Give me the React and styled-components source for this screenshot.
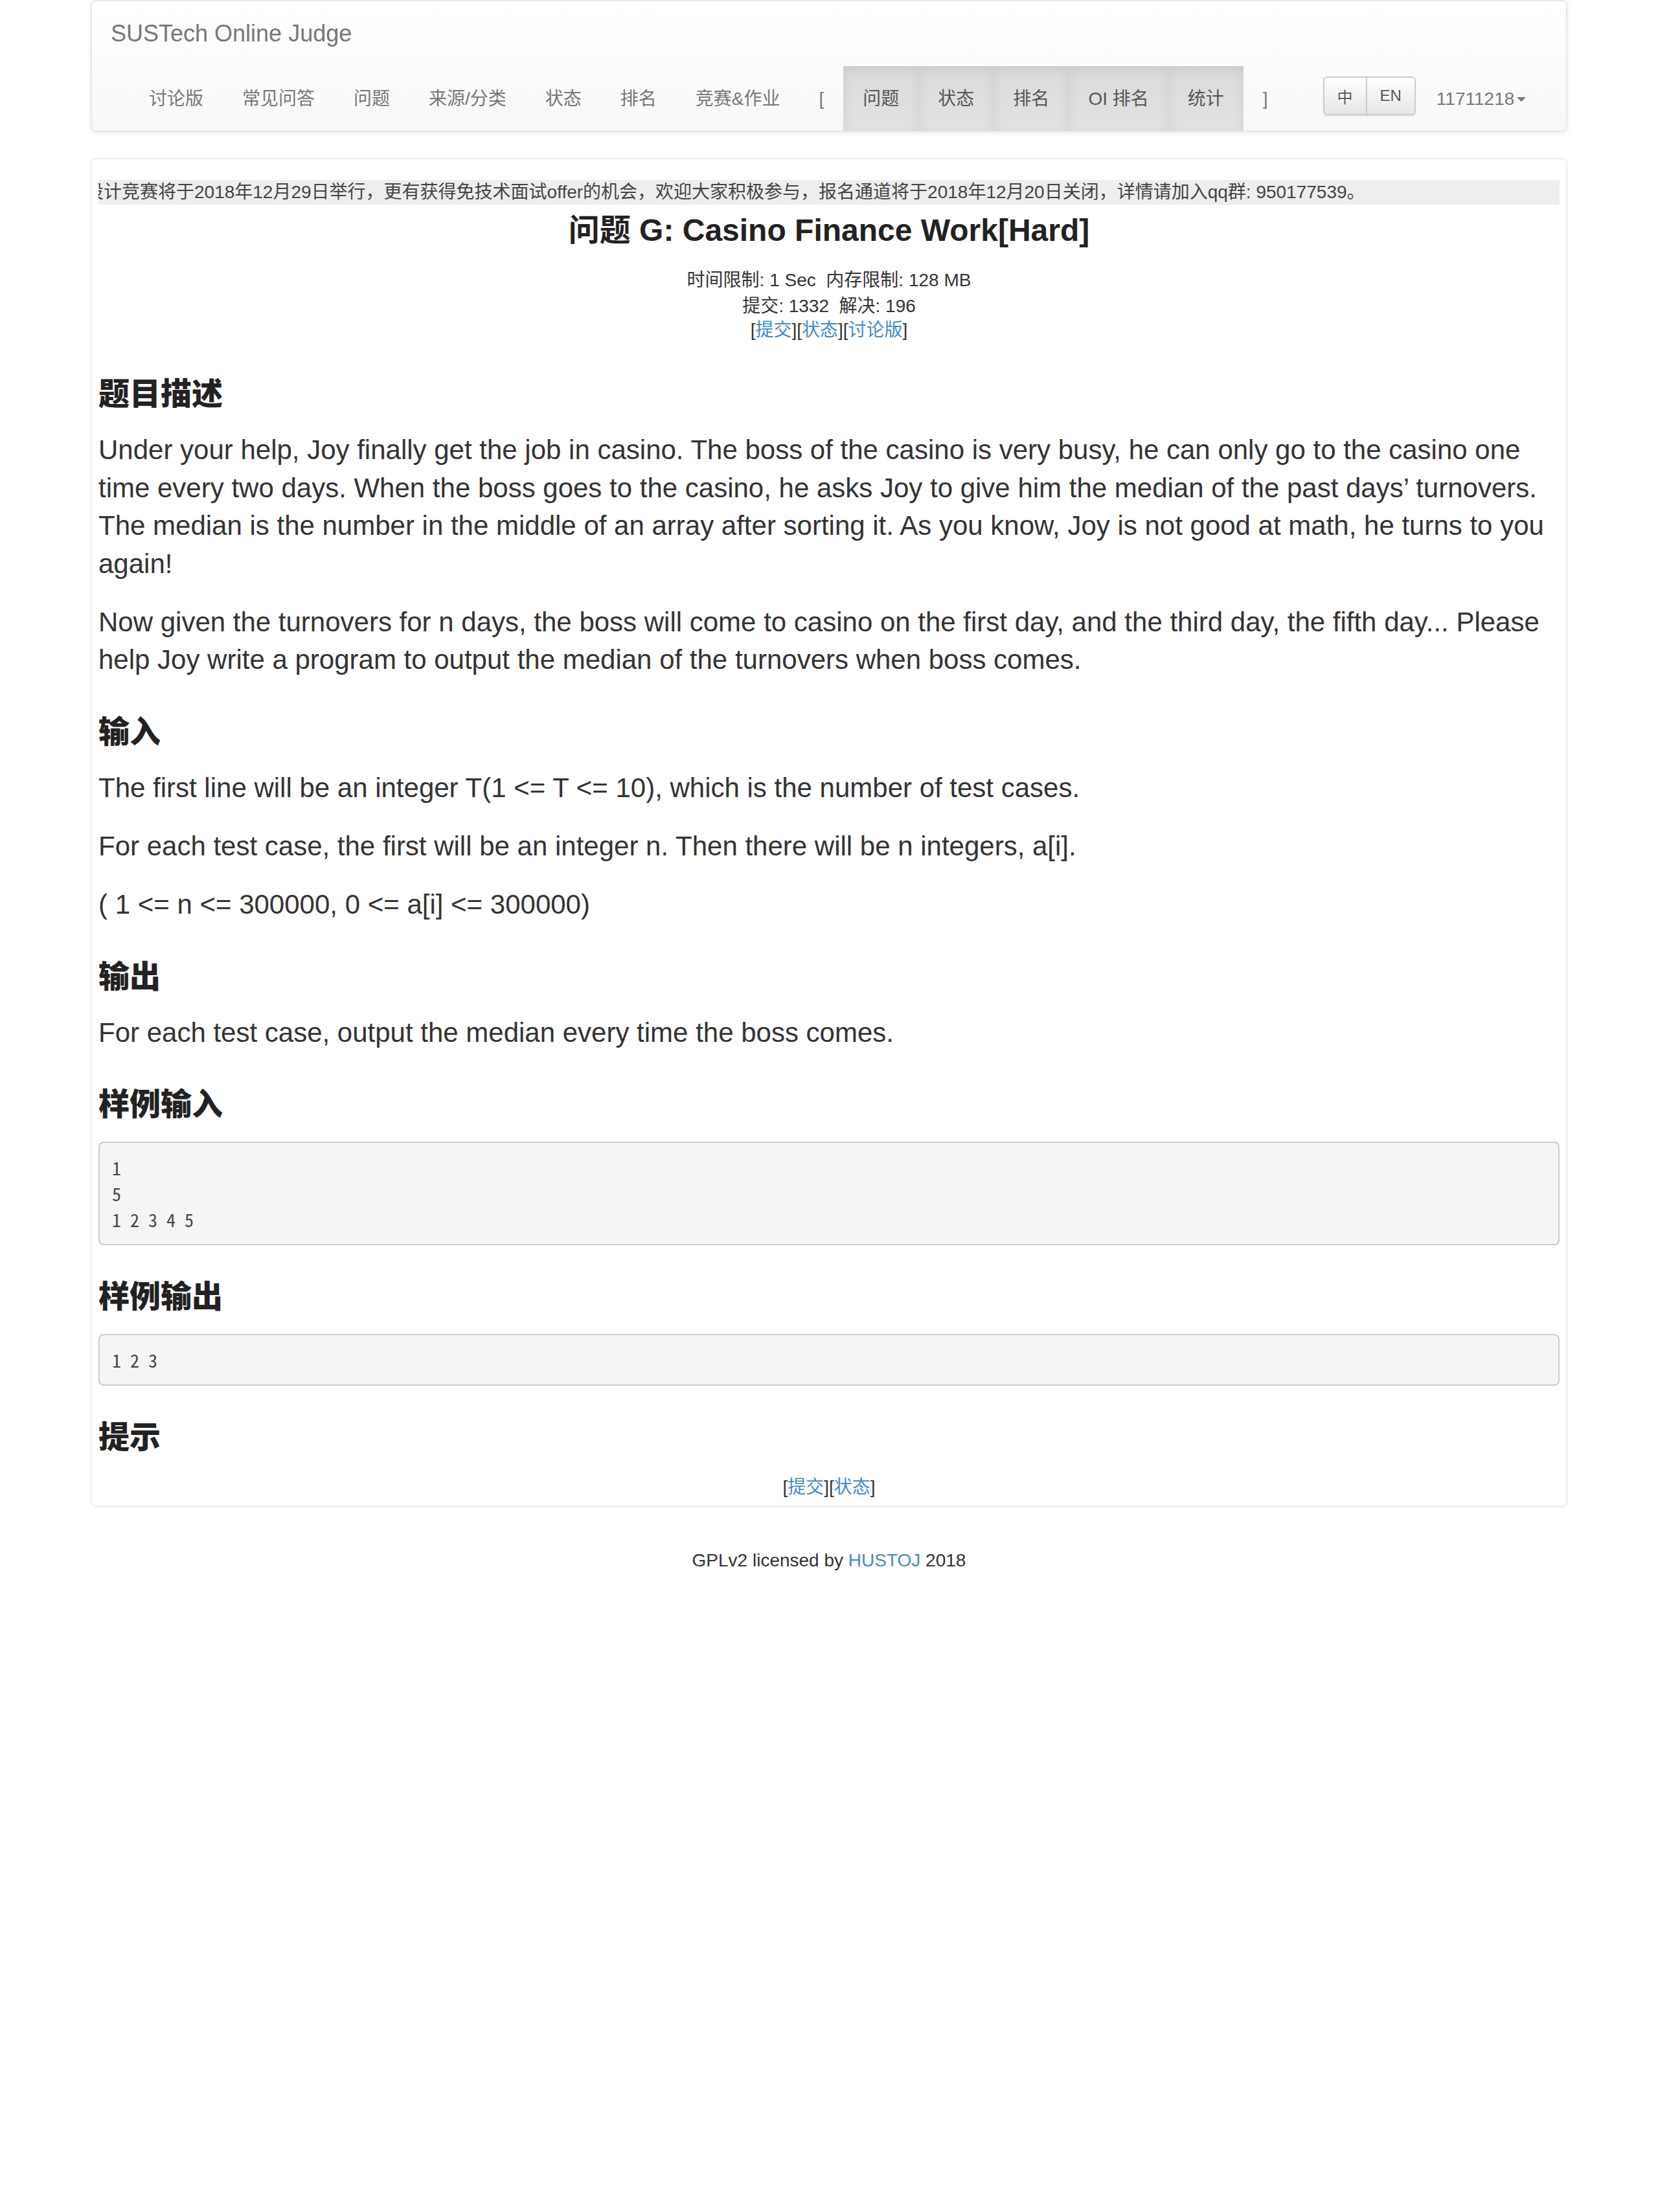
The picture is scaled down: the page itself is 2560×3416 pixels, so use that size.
import React from 'react';
import styled, { createGlobalStyle } from 'styled-components';

const mainLinks = ['讨论版', '常见问答', '问题', '来源/分类', '状态', '排名', '竞赛&作业'];
const contestLinks = ['问题', '状态', '排名', 'OI 排名', '统计'];

export default function App() {
  return (
    <>
      <GlobalStyle />
      <Page>
        <Navbar>
          <BrandRow>
            <Brand>SUSTech Online Judge</Brand>
          </BrandRow>
          <NavRow>
            {mainLinks.map((name) => (
              <NavItem key={name}>{name}</NavItem>
            ))}
            <NavItem>[</NavItem>
            {contestLinks.map((name) => (
              <NavItem key={name} $active>
                {name}
              </NavItem>
            ))}
            <NavItem>]</NavItem>
            <LangGroup>
              <LangButton>中</LangButton>
              <LangButton>EN</LangButton>
            </LangGroup>
            <UserMenu>
              11711218
              <Caret />
            </UserMenu>
          </NavRow>
        </Navbar>

        <Panel>
          <Notice>
            <NoticeText>
              设计竞赛将于2018年12月29日举行，更有获得免技术面试offer的机会，欢迎大家积极参与，报名通道将于2018年12月20日关闭，详情请加入qq群: 950177539。
            </NoticeText>
          </Notice>
          <Title>问题 G: Casino Finance Work[Hard]</Title>
          <Meta>
            <MetaLine>时间限制: 1 Sec&nbsp;&nbsp;内存限制: 128 MB</MetaLine>
            <MetaLine>提交: 1332&nbsp;&nbsp;解决: 196</MetaLine>
            <MetaLine $tight>
              [<Link>提交</Link>][<Link>状态</Link>][<Link>讨论版</Link>]
            </MetaLine>
          </Meta>

          <Section>
            <SectionTitle>题目描述</SectionTitle>
            <Para>
              Under your help, Joy finally get the job in casino. The boss of the casino is very busy, he can only go to the casino one
              time every two days. When the boss goes to the casino, he asks Joy to give him the median of the past days’ turnovers.
              The median is the number in the middle of an array after sorting it. As you know, Joy is not good at math, he turns to you
              again!
            </Para>
            <Para>
              Now given the turnovers for n days, the boss will come to casino on the first day, and the third day, the fifth day... Please
              help Joy write a program to output the median of the turnovers when boss comes.
            </Para>
          </Section>

          <Section>
            <SectionTitle>输入</SectionTitle>
            <Para>The first line will be an integer T(1 &lt;= T &lt;= 10), which is the number of test cases.</Para>
            <Para>For each test case, the first will be an integer n. Then there will be n integers, a[i].</Para>
            <Para>( 1 &lt;= n &lt;= 300000, 0 &lt;= a[i] &lt;= 300000)</Para>
          </Section>

          <Section>
            <SectionTitle>输出</SectionTitle>
            <Para>For each test case, output the median every time the boss comes.</Para>
          </Section>

          <Section>
            <SectionTitle>样例输入</SectionTitle>
            <Sample>{'1\n5\n1 2 3 4 5'}</Sample>
          </Section>

          <Section>
            <SectionTitle>样例输出</SectionTitle>
            <Sample>{'1 2 3'}</Sample>
          </Section>

          <Section>
            <SectionTitle>提示</SectionTitle>
            <MetaLine>
              [<Link>提交</Link>][<Link>状态</Link>]
            </MetaLine>
          </Section>
        </Panel>

        <Footer>
          GPLv2 licensed by <Link>HUSTOJ</Link> 2018
        </Footer>
      </Page>
    </>
  );
}

const GlobalStyle = createGlobalStyle`
  body {
    margin: 0;
    background: #fff;
    color: #333;
    font-family: "Liberation Sans", Arial, "Noto Sans CJK SC", sans-serif;
    font-size: 28px;
    line-height: 40px;
  }
`;

const Page = styled.div`
  width: 2280px;
  margin: 0 auto;
`;

const Navbar = styled.nav`
  margin-bottom: 40px;
  border: 2px solid #e7e7e7;
  border-radius: 8px;
  background: linear-gradient(to bottom, #fff 0, #f8f8f8 100%);
  box-shadow: inset 0 2px 0 rgba(255, 255, 255, 0.15), 0 2px 10px rgba(0, 0, 0, 0.075);
`;

const BrandRow = styled.div`
  height: 100px;
  display: flex;
  align-items: center;
  padding-left: 29px;
`;

const Brand = styled.a`
  font-size: 36px;
  line-height: 40px;
  color: #777;
  cursor: pointer;
`;

const NavRow = styled.div`
  height: 100px;
  display: flex;
  align-items: stretch;
  padding-left: 58px;
`;

const NavItem = styled.a`
  display: flex;
  align-items: center;
  padding: 2px 30px 0;
  color: ${(p) => (p.$active ? '#555' : '#777')};
  background: ${(p) => (p.$active ? 'linear-gradient(to bottom, #dbdbdb 0, #e2e2e2 100%)' : 'none')};
  box-shadow: ${(p) => (p.$active ? 'inset 0 6px 18px rgba(0, 0, 0, 0.075)' : 'none')};
  white-space: nowrap;
  cursor: pointer;
`;

const LangGroup = styled.div`
  display: flex;
  align-self: flex-start;
  margin: 16px 0 0 55px;
`;

const LangButton = styled.button`
  height: 60px;
  padding: 0 20px;
  font-family: inherit;
  font-size: 24px;
  color: #555;
  text-shadow: 0 2px 0 #fff;
  background: linear-gradient(to bottom, #fff 0, #e6e6e6 100%);
  border: 2px solid #ccc;
  box-shadow: inset 0 2px 0 rgba(255, 255, 255, 0.15), 0 2px 2px rgba(0, 0, 0, 0.075);
  cursor: pointer;

  &:first-child {
    border-radius: 6px 0 0 6px;
  }
  & + & {
    margin-left: -2px;
    border-radius: 0 6px 6px 0;
  }
`;

const UserMenu = styled.a`
  display: flex;
  align-items: center;
  padding: 2px 30px 0 32px;
  color: #777;
  cursor: pointer;
`;

const Caret = styled.span`
  width: 0;
  height: 0;
  margin-left: 4px;
  border-top: 7px solid #777;
  border-left: 7px solid transparent;
  border-right: 7px solid transparent;
`;

const Panel = styled.main`
  border: 2px solid #eee;
  border-radius: 8px;
  padding: 32px 10px 8px;
  box-shadow: 0 2px 4px rgba(0, 0, 0, 0.04);
`;

const Notice = styled.div`
  height: 38px;
  line-height: 38px;
  background: #eee;
  color: #444;
  overflow: hidden;
  white-space: nowrap;
`;

const NoticeText = styled.div`
  margin-left: -20px;
`;

const Title = styled.h2`
  margin: 13px 0 0;
  font-size: 48px;
  line-height: 53px;
  font-weight: bold;
  text-align: center;
  color: #222;
`;

const Meta = styled.div`
  margin-top: 31px;
`;

const MetaLine = styled.div`
  text-align: center;
  line-height: ${(p) => (p.$tight ? '34px' : '40px')};
`;

const Link = styled.a`
  color: #428bca;
  text-decoration: none;
  cursor: pointer;
`;

const Section = styled.section`
  margin-top: 56px;
`;

const SectionTitle = styled.h2`
  margin: 0 0 31px;
  font-size: 48px;
  line-height: 52px;
  font-weight: 900;
  color: #222;
`;

const Para = styled.p`
  margin: 0;
  font-size: 42px;
  line-height: 58.6px;

  & + & {
    margin-top: 31.4px;
  }
`;

const Sample = styled.pre`
  margin: 2px 0 -2px;
  padding: 18px 19px;
  font-family: "Noto Sans Mono CJK SC", "Liberation Mono", monospace;
  font-size: 28px;
  line-height: 40px;
  color: #444;
  background: #f5f5f5;
  border: 2px solid #ccc;
  border-radius: 8px;
  white-space: pre-wrap;
`;

const Footer = styled.footer`
  margin-top: 63px;
  text-align: center;
`;
